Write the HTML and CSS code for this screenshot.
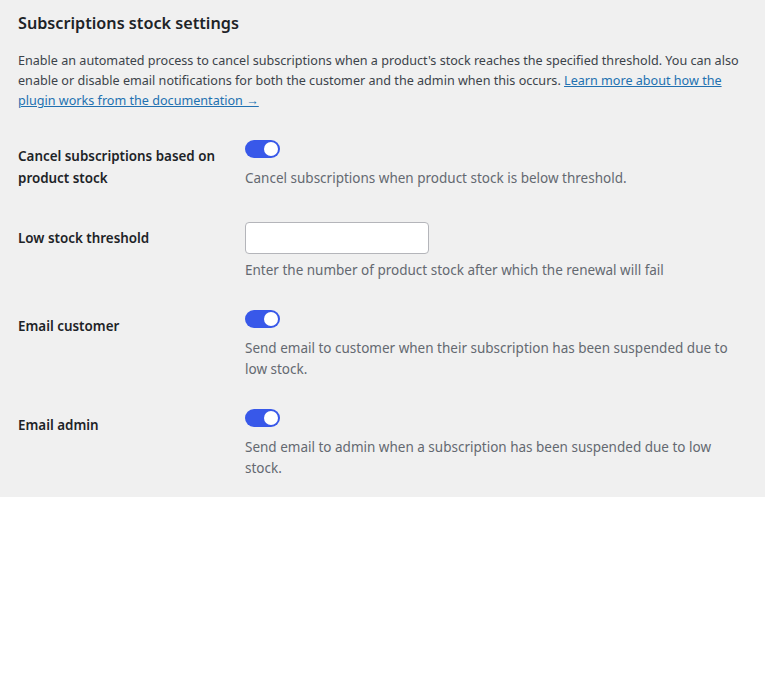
FILE: index.html
```html
<!DOCTYPE html>
<html>
<head>
  <title>Subscriptions stock settings</title>
  <link rel="stylesheet" href="styles.css">
</head>
<body>
  <div class="panel">
    <h2 class="panel-title">Subscriptions stock settings</h2>
    <p class="panel-intro">
      Enable an automated process to cancel subscriptions when a product's stock reaches the specified threshold. You can also enable or disable email notifications for both the customer and the admin when this occurs.
      <a href="#">Learn more about how the plugin works from the documentation &rarr;</a>
    </p>

    <table class="form-table">
      <tr>
        <th>Cancel subscriptions based on product stock</th>
        <td>
          <label class="toggle"><input type="checkbox" checked><span class="slider"></span></label>
          <p class="help">Cancel subscriptions when product stock is below threshold.</p>
        </td>
      </tr>
      <tr>
        <th>Low stock threshold</th>
        <td>
          <input class="text-input" type="text">
          <p class="help help-tight">Enter the number of product stock after which the renewal will fail</p>
        </td>
      </tr>
      <tr>
        <th>Email customer</th>
        <td>
          <label class="toggle"><input type="checkbox" checked><span class="slider"></span></label>
          <p class="help">Send email to customer when their subscription has been suspended due to low stock.</p>
        </td>
      </tr>
      <tr>
        <th>Email admin</th>
        <td>
          <label class="toggle"><input type="checkbox" checked><span class="slider"></span></label>
          <p class="help">Send email to admin when a subscription has been suspended due to low stock.</p>
        </td>
      </tr>
    </table>
  </div>
</body>
</html>
```

FILE: styles.css
```css
body {
  margin: 0;
  background-color: #fff;
  font-family: "Noto Sans", "Open Sans", sans-serif;
  color: #1d2327;
}

.panel {
  background-color: #f0f0f0;
  padding: 11px 18px 4px;
}

.panel-title {
  margin: 0;
  font-size: 16.2px;
  font-weight: 600;
  line-height: 24px;
}

.panel-intro {
  margin: 16px 0 0;
  font-size: 12.6px;
  line-height: 20px;
  color: #3c434a;
}

.panel-intro a {
  color: #2271b1;
}

.form-table {
  margin-top: 14px;
  border-collapse: collapse;
  width: 100%;
}

.form-table th {
  width: 217px;
  padding: 20px 10px 18px 0;
  text-align: left;
  vertical-align: top;
  font-size: 13.4px;
  font-weight: 600;
  line-height: 22px;
}

.form-table td {
  padding: 15px 0 14px;
  vertical-align: top;
}

.help {
  margin: 10px 0 0;
  font-size: 13.5px;
  line-height: 21px;
  color: #646970;
}

.help-tight {
  margin-top: 6px;
}

.text-input {
  display: block;
  box-sizing: border-box;
  width: 184px;
  height: 32px;
  margin: 0;
  border: 1px solid #b4b5ba;
  border-radius: 4px;
  background-color: #fff;
}

.toggle {
  position: relative;
  display: block;
  width: 35px;
  height: 18px;
}

.toggle input {
  display: none;
}

.slider {
  position: absolute;
  inset: 0;
  border-radius: 9px;
  background-color: #3858e9;
}

.slider::before {
  content: "";
  position: absolute;
  top: 2px;
  right: 2px;
  width: 14px;
  height: 14px;
  border-radius: 50%;
  background-color: #fff;
}
```
